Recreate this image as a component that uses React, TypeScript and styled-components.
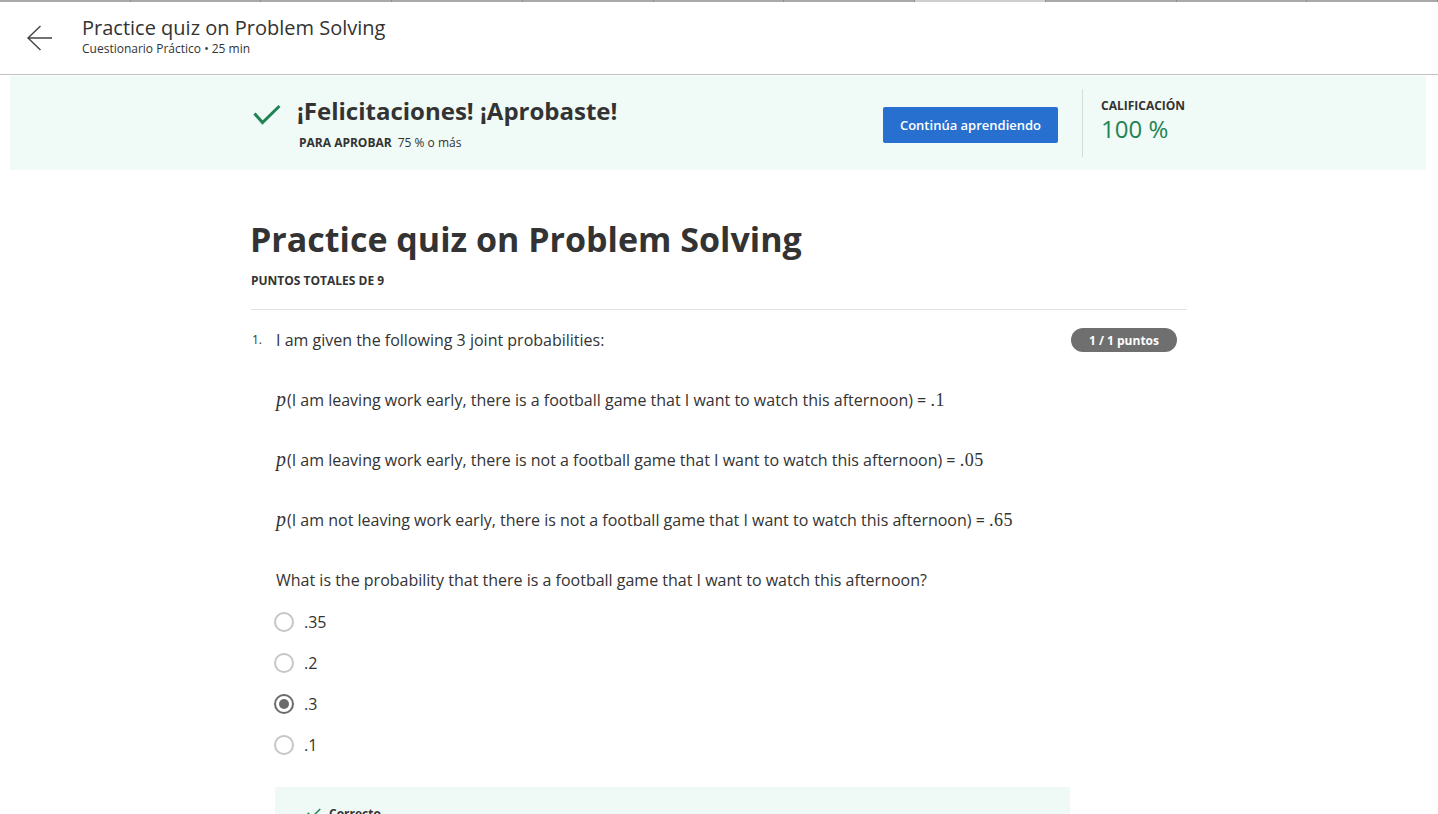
import React from "react";
import styled, { createGlobalStyle } from "styled-components";

const GlobalStyle = createGlobalStyle`
  html, body { margin: 0; padding: 0; overflow: hidden; background: #fff; }
  body { font-family: "Open Sans", "Noto Sans", Arial, sans-serif; color: #333; }
  * { box-sizing: border-box; }
`;

const TabStrip = styled.div`
  display: flex;
  height: 2px;
  background: #a9a9a9;
`;
const TabSeg = styled.div<{ $active?: boolean }>`
  flex: 1;
  border-right: 1px solid #8f8f8f;
  background: ${(p) => (p.$active ? "#cfcfcf" : "transparent")};
`;

const Header = styled.header`
  height: 73px;
  display: flex;
  align-items: center;
  border-bottom: 1px solid #c2c2c2;
  padding-left: 27px;
  gap: 29px;
`;
const BackButton = styled.button`
  border: 0;
  background: none;
  padding: 0;
  display: flex;
  width: 26px;
  height: 26px;
  cursor: pointer;
`;
const HeaderText = styled.div`
  display: flex;
  flex-direction: column;
  margin-top: -4px;
`;
const HeaderTitle = styled.div`
  font-size: 20px;
  line-height: 26px;
  color: #333;
`;
const HeaderSub = styled.div`
  font-size: 12px;
  line-height: 16px;
  color: #333;
`;

const Banner = styled.section`
  margin: 1px 12px 0 10px;
  background: #f0faf6;
  padding: 13px 0;
`;
const Column = styled.div`
  width: 936px;
  margin: 0 auto;
`;
const BannerRow = styled(Column)`
  display: flex;
  align-items: center;
  justify-content: space-between;
  height: 68px;
`;
const PassBlock = styled.div`
  display: flex;
  align-items: flex-start;
  gap: 16px;
  padding-left: 3px;
`;
const CheckWrap = styled.div`
  margin-top: 8px;
  display: flex;
`;
const PassText = styled.div`
  display: flex;
  flex-direction: column;
  gap: 9px;
`;
const PassTitle = styled.div`
  font-size: 24px;
  line-height: 30px;
  font-weight: 700;
  color: #333;
`;
const PassInfo = styled.div`
  font-size: 12px;
  line-height: 16px;
  padding-left: 2px;
  color: #333;
  b { font-weight: 700; margin-right: 6px; }
`;
const RightGroup = styled.div`
  display: flex;
  align-items: center;
  height: 100%;
`;
const PrimaryButton = styled.button`
  width: 175px;
  height: 36px;
  border: 0;
  border-radius: 2px;
  background: #2870d0;
  color: #fff;
  font-family: "Open Sans", sans-serif;
  font-size: 13px;
  font-weight: 600;
  cursor: pointer;
  margin-top: 3px;
  margin-left: 1px;
`;
const VDivider = styled.div`
  width: 1px;
  align-self: stretch;
  background: #d6dcd9;
  margin: 0 18px 0 24px;
`;
const Grade = styled.div`
  width: 85px;
  display: flex;
  flex-direction: column;
  gap: 2px;
  margin-top: -6px;
`;
const GradeLabel = styled.div`
  font-size: 12px;
  line-height: 16px;
  font-weight: 700;
  color: #333;
`;
const GradeValue = styled.div`
  font-size: 24px;
  line-height: 26px;
  color: #1f8354;
`;

const Main = styled(Column)`
  padding-top: 47px;
`;
const QuizTitle = styled.h1`
  margin: 0;
  font-size: 34px;
  line-height: 44px;
  font-weight: 700;
  color: #333;
  margin-left: -1px;
`;
const TotalPoints = styled.div`
  margin-top: 12px;
  font-size: 12px;
  line-height: 16px;
  font-weight: 700;
  color: #333;
`;
const Rule = styled.hr`
  margin: 20px 0 18px;
  border: 0;
  border-top: 1px solid #e1e1e1;
`;
const QuestionRow = styled.div`
  display: flex;
  align-items: flex-start;
`;
const QNum = styled.div`
  width: 25px;
  font-size: 12px;
  line-height: 24px;
  padding-left: 1px;
`;
const QBody = styled.div`
  flex: 1;
`;
const QLine = styled.p`
  margin: 0;
  height: 24px;
  font-size: 16px;
  line-height: 24px;
  color: #333;
  & + & { margin-top: 36px; }
`;
const Badge = styled.div`
  margin-right: 10px;
  height: 24px;
  width: 106px;
  border-radius: 12px;
  background: #6f6f6f;
  color: #fff;
  font-size: 12px;
  font-weight: 700;
  display: flex;
  align-items: center;
  justify-content: center;
`;
const MathVar = styled.span`
  font-family: "Liberation Serif", "DejaVu Serif", serif;
  font-style: italic;
  font-size: 20px;
  line-height: 0;
  margin-right: 1px;
`;
const MathNum = styled.span`
  font-family: "Liberation Serif", "DejaVu Serif", serif;
  font-size: 18px;
  line-height: 0;
  letter-spacing: 0.5px;
`;
const Options = styled.div`
  margin-top: 9px;
  margin-left: -2px;
  display: flex;
  flex-direction: column;
`;
const OptionRow = styled.label`
  height: 41px;
  display: flex;
  align-items: center;
  gap: 10px;
  font-size: 16px;
  color: #333;
`;
const Radio = styled.span<{ $checked?: boolean }>`
  width: 20px;
  height: 20px;
  border-radius: 50%;
  border: 2px solid ${(p) => (p.$checked ? "#6b6b6b" : "#c6c6c6")};
  display: flex;
  align-items: center;
  justify-content: center;
  &::after {
    content: "";
    width: 10px;
    height: 10px;
    border-radius: 50%;
    background: ${(p) => (p.$checked ? "#6b6b6b" : "transparent")};
  }
`;
const Feedback = styled.div`
  margin-top: 22px;
  margin-left: -1px;
  width: 795px;
  background: #eff9f5;
  padding: 18px 32px 24px;
`;
const FeedbackHead = styled.div`
  display: flex;
  align-items: center;
  gap: 8px;
  font-size: 12px;
  font-weight: 700;
  color: #333;
`;

const Check = ({ size, stroke }: { size: number; stroke: number }) => (
  <svg width={size} height={size * 0.75} viewBox="0 0 28 21" fill="none">
    <path d="M1.5 9.5 L9.5 18.5 L26.5 2" stroke="#1f8354" strokeWidth={stroke} strokeLinecap="butt" />
  </svg>
);

const options = [".35", ".2", ".3", ".1"];

export default function App() {
  return (
    <>
      <GlobalStyle />
      <TabStrip>
        {Array.from({ length: 11 }).map((_, i) => (
          <TabSeg key={i} $active={i === 7} />
        ))}
      </TabStrip>
      <Header>
        <BackButton aria-label="Volver">
          <svg width="26" height="26" viewBox="0 0 26 26" fill="none">
            <path d="M1 13 H25 M13.5 1 L1 13 L13.5 25" stroke="#444" strokeWidth="1.4" />
          </svg>
        </BackButton>
        <HeaderText>
          <HeaderTitle>Practice quiz on Problem Solving</HeaderTitle>
          <HeaderSub>Cuestionario Práctico • 25 min</HeaderSub>
        </HeaderText>
      </Header>
      <Banner>
        <BannerRow>
          <PassBlock>
            <CheckWrap>
              <Check size={28} stroke={3} />
            </CheckWrap>
            <PassText>
              <PassTitle>¡Felicitaciones! ¡Aprobaste!</PassTitle>
              <PassInfo>
                <b>PARA APROBAR</b>75 % o más
              </PassInfo>
            </PassText>
          </PassBlock>
          <RightGroup>
            <PrimaryButton>Continúa aprendiendo</PrimaryButton>
            <VDivider />
            <Grade>
              <GradeLabel>CALIFICACIÓN</GradeLabel>
              <GradeValue>100 %</GradeValue>
            </Grade>
          </RightGroup>
        </BannerRow>
      </Banner>
      <Main>
        <QuizTitle>Practice quiz on Problem Solving</QuizTitle>
        <TotalPoints>PUNTOS TOTALES DE 9</TotalPoints>
        <Rule />
        <QuestionRow>
          <QNum>1.</QNum>
          <QBody>
            <QLine>I am given the following 3 joint probabilities:</QLine>
            <QLine>
              <MathVar>p</MathVar>(I am leaving work early, there is a football game that I want to watch this afternoon) = <MathNum>.1</MathNum>
            </QLine>
            <QLine>
              <MathVar>p</MathVar>(I am leaving work early, there is not a football game that I want to watch this afternoon) = <MathNum>.05</MathNum>
            </QLine>
            <QLine>
              <MathVar>p</MathVar>(I am not leaving work early, there is not a football game that I want to watch this afternoon) = <MathNum>.65</MathNum>
            </QLine>
            <QLine>What is the probability that there is a football game that I want to watch this afternoon?</QLine>
            <Options>
              {options.map((o) => (
                <OptionRow key={o}>
                  <Radio $checked={o === ".3"} />
                  {o}
                </OptionRow>
              ))}
            </Options>
            <Feedback>
              <FeedbackHead>
                <Check size={14} stroke={3} />
                Correcto
              </FeedbackHead>
            </Feedback>
          </QBody>
          <Badge>1 / 1 puntos</Badge>
        </QuestionRow>
      </Main>
    </>
  );
}
